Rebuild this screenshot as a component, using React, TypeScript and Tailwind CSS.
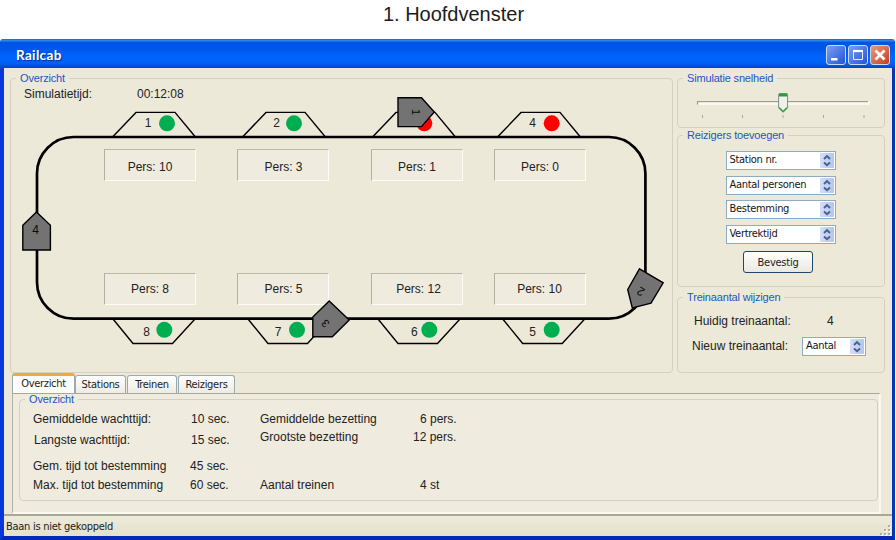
import React from "react";

const tahoma = "font-['DejaVu_Sans_Condensed','DejaVu_Sans',sans-serif] [font-stretch:condensed]";

type Station = { id: string; x: number; circle: number; label: number; color: string };

const GREEN = "#00ae50";
const RED = "#ff0000";

const topStations: Station[] = [
  { id: "1", x: 113, circle: 167, label: 148, color: GREEN },
  { id: "2", x: 243, circle: 294, label: 276.7, color: GREEN },
  { id: "3", x: 373, circle: 424.3, label: 407, color: RED },
  { id: "4", x: 498, circle: 551.7, label: 532.5, color: RED },
];

const bottomStations: Station[] = [
  { id: "8", x: 113, circle: 164.3, label: 146.7, color: GREEN },
  { id: "7", x: 248, circle: 297, label: 278, color: GREEN },
  { id: "6", x: 378, circle: 429.3, label: 414.3, color: GREEN },
  { id: "5", x: 502.7, circle: 551.7, label: 532.7, color: GREEN },
];

const trains = [
  { id: "1", points: "398,97.8 421.5,97.8 434.3,112 421.5,126.6 398,126.6", x: 416.5, y: 112, angle: 90, size: 11 },
  { id: "2", points: "639.5,268.8 663.2,282.8 651,303.2 632.3,308 627.7,289.5", x: 640.7, y: 291.7, angle: 211, size: 12 },
  { id: "3", points: "329.2,301 349.2,320 332.3,336.8 312.8,336.8 312.8,317", x: 325, y: 323.7, angle: 225, size: 11 },
  { id: "4", points: "36.5,212 50.4,225.2 50.4,250 22.8,250 22.8,225.2", x: 35.7, y: 230, angle: 0, size: 12 },
];

const counts = [
  { place: "left-[93px] top-[63px] pt-[3px]", n: 10 },
  { place: "left-[226px] top-[63px] pt-[3px] pl-px", n: 3 },
  { place: "left-[360px] top-[63px] pt-[3px]", n: 1 },
  { place: "left-[483px] top-[63px] pt-[3px]", n: 0 },
  { place: "left-[93px] top-[187px]", n: 8 },
  { place: "left-[226px] top-[187px] pl-px", n: 5 },
  { place: "left-[360px] top-[187px] pl-[3px]", n: 12 },
  { place: "left-[483px] top-[187px] pr-px", n: 10 },
];

function Group({ title, className, children }: { title: string; className: string; children: React.ReactNode }) {
  return (
    <fieldset className={`min-w-0 rounded-[4px] border border-[#d3d1bf] ${className}`}>
      <legend className="ml-[5px] h-[15px] pr-[4px] pl-[4px] text-[11px] leading-[15px] tracking-[-0.17px] whitespace-nowrap text-[#2456c0]">{title}</legend>
      {children}
    </fieldset>
  );
}

function Spinner({ label, className }: { label: string; className: string }) {
  return (
    <div className={`flex h-[19px] items-center border border-[#8cabc4] bg-white pr-px pl-[3px] ${className}`}>
      <span className={`flex-1 pb-[2px] text-[11px] leading-[15px] tracking-[-0.3px] whitespace-nowrap text-[#151515] ${tahoma}`}>{label}</span>
      <span className="flex h-[15px] w-[14px] items-center justify-center rounded-[1px] bg-linear-to-r from-[#d3defb] to-[#b4c5f0]">
        <svg width="8" height="13" viewBox="0 0 8 13" fill="none" stroke="#4a6189" strokeWidth="1.9">
          <path d="M1 5L4 2L7 5M1 8.5L4 11.3L7 8.5" />
        </svg>
      </span>
    </div>
  );
}

function Track() {
  return (
    <svg className="absolute inset-0" width="661" height="285" viewBox="11 86 661 285" fill="none">
      <g stroke="#000" strokeWidth="1.4">
        {topStations.map((s) => (
          <path key={s.id} d={`M${s.x} 136.5L${s.x + 23} 112.4H${s.x + 62}L${s.x + 82} 136.5`} />
        ))}
        {bottomStations.map((s) => (
          <path key={s.id} d={`M${s.x} 319L${s.x + 20} 343.5H${s.x + 59.5}L${s.x + 82} 319`} />
        ))}
      </g>
      <rect x="37" y="137" width="608.4" height="181.7" rx="36.5" stroke="#000" strokeWidth="2.7" />
      {topStations.map((s) => (
        <circle key={s.id} cx={s.circle} cy="123.3" r="8" fill={s.color} />
      ))}
      {bottomStations.map((s) => (
        <circle key={s.id} cx={s.circle} cy="329.8" r="8" fill={s.color} />
      ))}
      <g fill="#222" fontSize="12" textAnchor="middle">
        {topStations.map((s) => (
          <text key={s.id} x={s.label} y="127.3">{s.id}</text>
        ))}
        {bottomStations.map((s) => (
          <text key={s.id} x={s.label} y="335.8">{s.id}</text>
        ))}
      </g>
      {trains.map((t) => (
        <g key={t.id}>
          <polygon points={t.points} fill="#737373" stroke="#000" strokeWidth="1.4" />
          <text transform={`translate(${t.x} ${t.y}) rotate(${t.angle})`} y="4.2" fontSize={t.size} textAnchor="middle" fill="#0a0a0a">
            {t.id}
          </text>
        </g>
      ))}
    </svg>
  );
}

function TitleBar() {
  const btn = "flex h-[20px] w-[20px] items-center justify-center rounded-[3px] border border-[#c9dafb]";
  return (
    <div className="flex h-[29px] items-start rounded-t-[3px] pr-[5px] [background-image:linear-gradient(to_bottom,#1464c8_0,#2b8cf0_6%,#0054e6_11%,#0058ea_35%,#0066ff_65%,#005ef4_85%,#0044c4_100%)]">
      <span className="ml-[16px] flex-1 pt-[8px] font-['Lato',sans-serif] text-[13.5px] leading-[17px] font-bold tracking-[0.35px] text-white [text-shadow:1px_1px_1px_#0a2a90]">
        Railcab
      </span>
      <div className="mt-[6px] flex gap-[2px]">
        <span className={`${btn} bg-linear-to-br from-[#7c9df4] to-[#2353d2]`}>
          <svg width="18" height="18" viewBox="0 0 18 18"><path d="M4 12H10.5V14.5H4Z" fill="#fff" /></svg>
        </span>
        <span className={`${btn} bg-linear-to-br from-[#7c9df4] to-[#2353d2]`}>
          <svg width="18" height="18" viewBox="0 0 18 18" fill="none"><path d="M4.5 5H13.5V13.5H4.5Z" stroke="#e6eeff" strokeWidth="1" /><path d="M4 5H14" stroke="#fff" strokeWidth="2.2" /></svg>
        </span>
        <span className={`${btn} bg-linear-to-br from-[#e89a80] to-[#c43a14]`}>
          <svg width="18" height="18" viewBox="0 0 18 18"><path d="M4.5 4.5L13.5 13.5M13.5 4.5L4.5 13.5" stroke="#fff" strokeWidth="2.7" /></svg>
        </span>
      </div>
    </div>
  );
}

function Slider() {
  return (
    <svg width="206" height="42" viewBox="678 86 206 42" fill="none">
      <path d="M697.5 104.5V101.5H868.5" stroke="#9d9c90" strokeWidth="1.2" />
      <path d="M698.5 104H869V101" stroke="#fffef6" strokeWidth="1.6" />
      {[702.5, 742.5, 783, 823.5, 864].map((x) => (
        <path key={x} d={`M${x} 115V118`} stroke="#aaa998" />
      ))}
      <path d="M778.6 94.5Q778.6 93.6 779.6 93.6H786.6Q787.6 93.6 787.6 94.5V107.5L783.1 112L778.6 107.5Z" fill="#f1f1ec" stroke="#7d8b90" />
      <path d="M779 93.5H787.2V96.5H779Z" fill="#2ba032" />
      <path d="M779 107.6L783.1 111.6L787.2 107.6" stroke="#3c9f45" strokeWidth="1.5" />
    </svg>
  );
}

function Tabs() {
  const tab = "flex h-[18px] items-center justify-center rounded-t-[3px] border border-b-0 border-[#9aaab0] bg-linear-to-b from-white to-[#ecebe4]";
  return (
    <div className={`flex h-[20px] items-end text-[11px] leading-[14px] tracking-[-0.3px] whitespace-nowrap text-[#1c1c1c] ${tahoma}`}>
      <span className="flex h-[20px] w-[63px] items-center justify-center rounded-t-[3px] border-x border-t-[3px] border-x-[#9aaab0] border-t-[#f2a83a] bg-[#fcfcfa] pb-px">Overzicht</span>
      <span className={`${tab} w-[51px]`}>Stations</span>
      <span className={`${tab} ml-[1px] w-[50px]`}>Treinen</span>
      <span className={`${tab} ml-[1px] w-[57px]`}>Reizigers</span>
    </div>
  );
}

export default function App() {
  return (
    <div className="flex h-[540px] w-[896px] flex-col overflow-hidden bg-white font-['Liberation_Sans',Arial,sans-serif] text-[12px] text-[#222]">
      <h1 className="h-[39px] pt-[2px] pl-[11px] text-center text-[20px] leading-[24px] text-[#1c1c1c]">1. Hoofdvenster</h1>
      <div className="flex w-[895px] flex-1 flex-col">
        <TitleBar />
        <div className="flex flex-1 flex-col border-r-[3px] border-b-[4px] border-l-[4px] border-l-[#0838dc] border-r-[#0636b4] border-b-[#0428b8] bg-[#ece9d8]">
          <div className="flex pt-[3px] pl-[6px]">
            <Group title="Overzicht" className="h-[302px] w-[663px]">
              <div className="relative h-[285px]">
                <div className="flex pt-px pl-[13px] leading-[15px]">
                  <span className="w-[113px]">Simulatietijd:</span>
                  <span>00:12:08</span>
                </div>
                {counts.map((c) => (
                  <div
                    key={c.place}
                    className={`absolute flex h-[32px] w-[92px] items-center justify-center border border-t-[#bbb8a8] border-r-[#fdfcf6] border-b-[#fdfcf6] border-l-[#b3b0a1] bg-[#efebde] ${c.place}`}
                  >
                    Pers: {c.n}
                  </div>
                ))}
                <Track />
              </div>
            </Group>
            <div className="ml-[4px] flex w-[208px] flex-col">
              <Group title="Simulatie snelheid" className="h-[57px]">
                <Slider />
              </Group>
              <Group title="Reizigers toevoegen" className="h-[159px]">
                <div className="flex flex-col items-center gap-[5.6px] pt-[8px] pr-px">
                  <Spinner label="Station nr." className="w-[110px]" />
                  <Spinner label="Aantal personen" className="w-[110px]" />
                  <Spinner label="Bestemming" className="w-[110px]" />
                  <Spinner label="Vertrektijd" className="w-[110px]" />
                  <button className={`mt-[2px] mr-[5px] h-[22px] w-[70px] rounded-[3px] border border-[#1f4568] bg-linear-to-b from-white to-[#e9e8e0] text-[11px] leading-[19px] tracking-[-0.25px] text-[#1c1c1c] ${tahoma}`}>
                    Bevestig
                  </button>
                </div>
              </Group>
              <Group title="Treinaantal wijzigen" className="mt-[3px] h-[83px]">
                <div className="flex h-[24px] items-end pl-[16px] leading-[15px]">
                  <span className="w-[133px]">Huidig treinaantal:</span>
                  <span>4</span>
                </div>
                <div className="flex h-[27px] items-end pl-[14px] leading-[19px]">
                  <span className="w-[110px]">Nieuw treinaantal:</span>
                  <Spinner label="Aantal" className="w-[64px]" />
                </div>
              </Group>
            </div>
          </div>
          <div className="pl-[8px]">
            <Tabs />
            <div className="h-[121px] w-[869px] border-t border-r-2 border-b-2 border-l border-t-[#a9a799] border-r-[#fbf9ef] border-b-[#fbf9ef] border-l-[#b5b3a5] bg-[#efebde]">
              <Group title="Overzicht" className="-mt-[2px] ml-[6px] h-[109px] w-[859px]">
                <div className="flex pl-[13px] leading-[15px] whitespace-nowrap">
                  <div className="grid w-[157px] grid-rows-[20px_21px_26px_19px] items-end">
                    <span>Gemiddelde wachttijd:</span>
                    <span className="pl-[1px]">Langste wachttijd:</span>
                    <span>Gem. tijd tot bestemming</span>
                    <span>Max. tijd tot bestemming</span>
                  </div>
                  <div className="grid w-[70px] grid-rows-[20px_21px_26px_19px] items-end">
                    <span className="pl-[1px]">10 sec.</span>
                    <span className="pl-[1px]">15 sec.</span>
                    <span>45 sec.</span>
                    <span>60 sec.</span>
                  </div>
                  <div className="grid w-[153px] grid-rows-[20px_18px_48px] items-end">
                    <span>Gemiddelde bezetting</span>
                    <span>Grootste bezetting</span>
                    <span>Aantal treinen</span>
                  </div>
                  <div className="grid grid-rows-[20px_18px_48px] items-end">
                    <span className="pl-[7px]">6 pers.</span>
                    <span>12 pers.</span>
                    <span className="pl-[7px]">4 st</span>
                  </div>
                </div>
              </Group>
            </div>
          </div>
          <div className={`mt-auto flex h-[22px] items-center justify-between border-t-2 border-[#aaa796] bg-linear-to-b from-[#edebdb] to-[#e4e1cb] pl-[2px] text-[11px] text-[#1c1c1c] ${tahoma}`}>
            <span className="pt-[2px] tracking-[-0.27px]">Baan is niet gekoppeld</span>
            <svg className="self-end" width="13" height="13" viewBox="0 0 13 13">
              {[[9, 2], [5, 6], [9, 6], [1, 10], [5, 10], [9, 10]].map(([x, y]) => (
                <g key={`${x}-${y}`}>
                  <rect x={x + 1} y={y + 1} width="2" height="2" fill="#fff" />
                  <rect x={x} y={y} width="2" height="2" fill="#b0ad9c" />
                </g>
              ))}
            </svg>
          </div>
        </div>
      </div>
    </div>
  );
}
